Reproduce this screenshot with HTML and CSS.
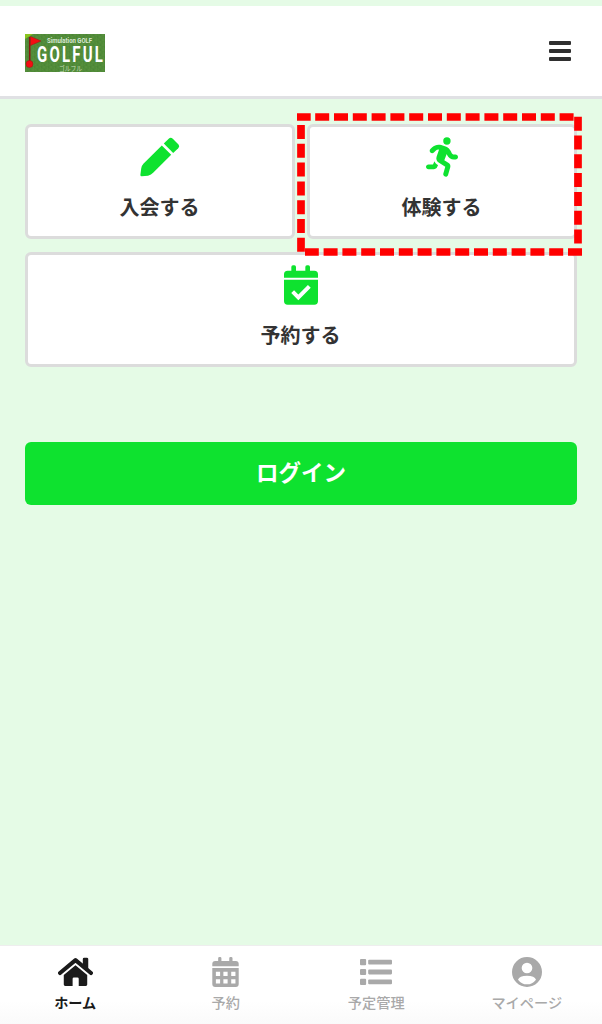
FILE: index.html
```html
<!DOCTYPE html>
<html lang="ja">
  <head>
    <meta charset="utf-8">
    <title>GOLFUL</title>
    <link rel="stylesheet" href="styles.css">
  </head>

  <body>
    <header class="header">
      <svg class="logo" viewBox="0 0 80 38" role="img" aria-label="GOLFUL">
        <defs>
          <pattern id="grass" width="7" height="5" patternUnits="userSpaceOnUse">
            <rect width="7" height="5" fill="#508b38" />
            <path d="M0 1h2M4 3h2M3 0h1M1 4h1" stroke="#5a923f" />
            <path d="M5 1h1M2 3h1" stroke="#488234" />
          </pattern>
        </defs>
        <rect width="80" height="38" fill="url(#grass)" />
        <path d="M0 0h8L0 5z" fill="#8ac51f" />
        <path d="M4.700 3v26" stroke="#8c1710" stroke-width="1.600" />
        <path d="M5.500 2.500 16 7 5.500 11.500z" fill="#f40d12" stroke="#a11512" stroke-width=".5" />
        <circle cx="4.500" cy="30" r="3.500" fill="#f40d12" stroke="#a11512" stroke-width=".5" />
        <text class="logo-small" x="22" y="9" textLength="45" lengthAdjust="spacingAndGlyphs">Simulation GOLF</text>
        <text class="logo-name" transform="translate(12 27.800) scale(.68 1)" textLength="97">GOLFUL</text>
        <text class="logo-kana" x="34" y="36.500" textLength="23" lengthAdjust="spacingAndGlyphs">ゴルフル</text>
      </svg>
      <div class="menu-button">
        <span></span>
        <span></span>
        <span></span>
      </div>
    </header>

    <main>
      <div class="cards">
        <a class="card">
          <svg width="40" height="40" viewBox="0 0 40 40">
            <path d="M23.800 6.600 28.700 1.700Q30.700-.1 32.800 1.700L38 6.900Q40 9 38.200 11.200L33.200 16z" />
            <path d="M21.800 8.400 31.200 17.800 13.400 35.600Q11.200 37.800 8 38.700L1.800 39.300Q.2 39.400.4 37.800L1.200 31.500Q1.500 28.800 3.400 26.800z" />
          </svg>
          <span>入会する</span>
        </a>
        <a class="card">
          <svg width="32" height="39" viewBox="0 0 416 512">
            <path d="M320 48a48 48 0 1 0-96 0 48 48 0 1 0 96 0zM125.700 175.500c9.900-9.900 23.400-15.500 37.500-15.500 1.900 0 3.800.1 5.600.3L137.600 254c-9.300 28 1.700 58.800 26.800 74.500l86.200 53.900-25.400 88.800c-4.900 17 5 34.700 22 39.600s34.700-5 39.600-22l28.700-100.400c5.900-20.600-2.600-42.600-20.700-53.900L238 299l30.900-82.400 5.100 12.300C289 264.700 323.900 288 362.700 288H384c17.700 0 32-14.300 32-32s-14.300-32-32-32h-21.300c-12.900 0-24.600-7.800-29.500-19.700l-6.300-15c-14.600-35.100-44.100-61.900-80.500-73.100l-48.700-15c-11.100-3.400-22.700-5.200-34.400-5.200-31 0-60.800 12.300-82.700 34.300l-23.200 23.100c-12.500 12.500-12.500 32.800 0 45.300s32.800 12.500 45.300 0zM91.200 352H32c-17.700 0-32 14.300-32 32s14.300 32 32 32h69.600c19 0 36.200-11.200 43.900-28.500L157 361.600l-9.500-6c-17.500-10.900-30.500-26.800-37.900-44.900z" />
          </svg>
          <span>体験する</span>
        </a>
        <a class="card card-wide">
          <svg width="34" height="39" viewBox="0 0 102 118">
            <path d="M22 16V5q0-5 5-5h4q5 0 5 5v11h28V5q0-5 5-5h4q5 0 5 5v11h13q11 0 11 11v10H0V27q0-11 11-11z" />
            <path d="M0 43h102v64q0 11-11 11H11q-11 0-11-11z" />
            <path class="check" d="M26 79 43 96 76 63" />
          </svg>
          <span>予約する</span>
        </a>

        <!-- highlight around the trial card -->
        <svg class="highlight" viewBox="0 0 285 143">
          <path d="M0 4h13.700M18.200 4H277" />
          <path d="M281 3.700V131" />
          <path d="M285 139H8" />
          <path d="M4 12V139" />
        </svg>
      </div>

      <a class="login">ログイン</a>
    </main>

    <nav class="tabs">
      <a class="tab active">
        <svg width="35" height="29" viewBox="0 0 103 84">
          <path d="M73 30V4q0-4 4-4h8q4 0 4 4v38z" />
          <path class="roof" d="M6 45 51.500 7 97 45" />
          <path d="M51.500 22 86 51v28q0 4-4 4H61V62q0-4-4-4H47q-4 0-4 4v21H21q-4 0-4-4V51z" />
        </svg>
        <span>ホーム</span>
      </a>
      <a class="tab">
        <svg width="27" height="31" viewBox="0 0 81 92">
          <path d="M18 12V4q0-4 4-4h2q4 0 4 4v8h24V4q0-4 4-4h2q4 0 4 4v8h10q9 0 9 9v7H0v-7q0-9 9-9z" />
          <path fill-rule="evenodd" d="M0 34h81v49q0 9-9 9H9q-9 0-9-9zM11 45v13h13V45zm23 0v13h13V45zm24 0v13h13V45zM11 68v13h13V68zm23 0v13h13V68zm24 0v13h13V68z" />
        </svg>
        <span>予約</span>
      </a>
      <a class="tab">
        <svg width="32" height="26" viewBox="0 0 94 76">
          <rect width="18" height="18" rx="3" />
          <rect y="29" width="18" height="18" rx="3" />
          <rect y="58" width="18" height="18" rx="3" />
          <rect x="24" y="2" width="70" height="14" rx="3" />
          <rect x="24" y="31" width="70" height="14" rx="3" />
          <rect x="24" y="60" width="70" height="14" rx="3" />
        </svg>
        <span>予定管理</span>
      </a>
      <a class="tab">
        <svg width="30" height="30" viewBox="0 0 90 90">
          <path fill-rule="evenodd" d="M45 0a45 45 0 1 1 0 90 45 45 0 0 1 0-90zm0 17a16 16 0 1 0 0 32 16 16 0 0 0 0-32zM18 68q11 14 27 14t27-14q-4-12-27-12t-27 12z" />
        </svg>
        <span>マイページ</span>
      </a>
    </nav>
  </body>
</html>
```

FILE: styles.css
```css
* {
  box-sizing: border-box;
}

body {
  display: flex;
  flex-direction: column;
  height: 1024px;
  margin: 0;
  border-top: 6px solid #e5fbe6;
  background: #e5fbe6;
  color: #333;
  font-family: "Noto Sans CJK JP", sans-serif;
}

.header {
  display: flex;
  justify-content: space-between;
  align-items: center;
  height: 93px;
  padding: 0 31px 0 25px;
  background: #fff;
  border-bottom: 3px solid #e0e1e4;
}

.logo {
  width: 80px;
  height: 38px;
  margin-top: 3px;
}

.logo text {
  fill: #fff;
  font-family: Roboto, "Noto Sans CJK JP", sans-serif;
  font-weight: bold;
}

.logo .logo-small {
  fill: #d9e8d2;
  font-size: 7px;
}

.logo .logo-name {
  font-size: 22px;
}

.logo .logo-kana {
  fill: #c5dcba;
  font-size: 7px;
  font-weight: normal;
}

.menu-button {
  display: grid;
  gap: 4px;
  width: 22px;
}

.menu-button span {
  height: 4px;
  border-radius: 1px;
  background: #2f2f2f;
}

main {
  flex: 1;
  padding: 25px 25px 0;
}

.cards {
  position: relative;
  display: grid;
  grid-template-columns: 1fr 1fr;
  gap: 13px 12px;
}

.card {
  display: flex;
  flex-direction: column;
  align-items: center;
  height: 115px;
  padding-top: 10px;
  border: 3px solid #dcdcdc;
  border-radius: 6px;
  background: #fff;
  font-size: 20px;
  font-weight: bold;
  line-height: 30px;
}

.card svg {
  height: 40px;
  margin-bottom: 15px;
  fill: #0ee22f;
}

.card span {
  margin-right: 1px;
}

.card-wide {
  grid-column: span 2;
}

.card .check {
  fill: none;
  stroke: #fff;
  stroke-width: 12px;
}

/* sits over the second card */
.highlight {
  position: absolute;
  top: -11px;
  right: -5px;
  width: 285px;
  height: 143px;
  fill: none;
  stroke: #f00;
  stroke-width: 7.7px;
  stroke-dasharray: 14 4.8;
}

.login {
  display: block;
  height: 63px;
  margin-top: 75px;
  border-radius: 6px;
  background: #0ee22f;
  color: #fff;
  font-size: 22.5px;
  font-weight: bold;
  line-height: 59px;
  text-align: center;
}

.tabs {
  display: grid;
  grid-template-columns: repeat(4, 1fr);
  height: 79px;
  border-top: 1px solid #eee;
  background: linear-gradient(#fff 70%, #fafafa);
}

.tab {
  display: flex;
  flex-direction: column;
  align-items: center;
  padding-top: 10px;
  color: #a9a9a9;
  font-size: 14.2px;
  font-weight: 500;
  line-height: 20px;
}

.tab svg {
  height: 32px;
  padding: 1px 0;
  margin-bottom: 4px;
  fill: #a9a9a9;
}

.tab.active {
  color: #1b1b1b;
  font-weight: bold;
}

.tab.active svg {
  fill: #1b1b1b;
}

.tab .roof {
  fill: none;
  stroke: #1b1b1b;
  stroke-width: 12px;
  stroke-linecap: round;
  stroke-linejoin: round;
}
```
